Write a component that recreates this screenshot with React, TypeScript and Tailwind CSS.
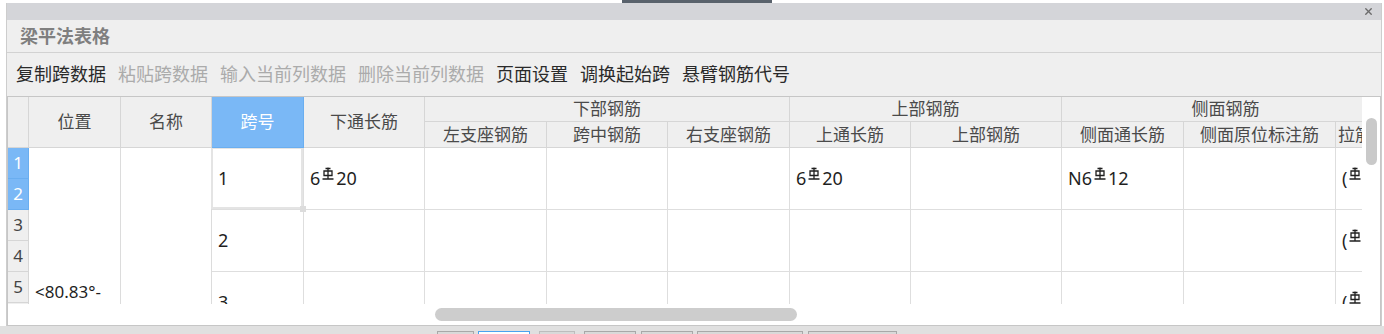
import React from "react";
import { X } from "lucide-react";

const Rebar = () => (
  <svg
    width="12"
    height="13"
    viewBox="0 0 12 13"
    fill="none"
    stroke="#1f1f1f"
    strokeWidth="1.3"
    className="inline-block align-[5px] mx-[2px]"
  >
    <path d="M6 0.5V11.5M3.5 1.5H8.5M2 4H10V8.5H2ZM0.5 12H11.5" />
  </svg>
);

const Bar = ({ n, d, pre = "" }: { n: string; d: string; pre?: string }) => (
  <span className="whitespace-nowrap">
    {pre}
    {n}
    <Rebar />
    {d}
  </span>
);

interface Col {
  w: string;
  cells: React.ReactNode[];
}

const dataCols: Col[] = [
  { w: "w-[92px]", cells: ["1", "2", "3"] },
  { w: "w-[121px]", cells: [<Bar n="6" d="20" />, "", ""] },
  { w: "w-[122px]", cells: ["", "", ""] },
  { w: "w-[121px]", cells: ["", "", ""] },
  { w: "w-[122px]", cells: ["", "", ""] },
  { w: "w-[121px]", cells: [<Bar n="6" d="20" />, "", ""] },
  { w: "w-[151px]", cells: ["", "", ""] },
  { w: "w-[122px]", cells: [<Bar n="N6" d="12" />, "", ""] },
  { w: "w-[152px]", cells: ["", "", ""] },
  {
    w: "w-[54px]",
    cells: [<Bar pre="(" n="" d="12)" />, <Bar pre="(" n="" d="12)" />, <Bar pre="(" n="" d="12)" />],
  },
];

const head = "flex items-center justify-center border-r border-b border-[#d6d6d6] bg-[#efefef] text-[#4a4a4a] whitespace-nowrap overflow-hidden";

const tools = [
  { t: "复制跨数据", on: true },
  { t: "粘贴跨数据", on: false },
  { t: "输入当前列数据", on: false },
  { t: "删除当前列数据", on: false },
  { t: "页面设置", on: true },
  { t: "调换起始跨", on: true },
  { t: "悬臂钢筋代号", on: true },
];

export default function App() {
  return (
    <div className="w-[1384px] h-[334px] overflow-hidden bg-white flex flex-col font-['Noto_Sans','Noto_Sans_CJK_SC',sans-serif]">
      <div className="h-[3px] flex shrink-0">
        <div className="ml-[622px] w-[150px] bg-[#59626c]" />
      </div>

      <div className="flex-1 min-h-0 ml-[6px] mr-[2px] flex flex-col border-l border-r border-[#cdcdcd]">
        <div className="h-[17px] shrink-0 bg-[#d4d5d9] flex items-center justify-end pr-[7px]">
          <X size={11} strokeWidth={3} color="#6b6b6b" />
        </div>

        <div className="h-[33px] shrink-0 bg-[#efefef] border-b border-[#d2d2d2] flex items-center pl-[13px] text-[18px] font-bold text-[#7f7f7f]">
          梁平法表格
        </div>

        <div className="h-[43px] shrink-0 bg-[#efefef] flex items-center gap-[12px] pl-[9px] text-[18px]">
          {tools.map((x) => (
            <span key={x.t} className={x.on ? "text-[#2a2a2a]" : "text-[#ababab]"}>
              {x.t}
            </span>
          ))}
        </div>

        {/* table frame */}
        <div className="flex-1 min-h-0 flex bg-white border border-[#c6c6c6]">
          <div className="w-[1354px] flex flex-col overflow-hidden">
            <div className="h-[51px] shrink-0 grid grid-cols-[21px_92px_91px_92px_121px_122px_121px_122px_121px_151px_122px_152px_54px] grid-rows-[25px_26px] w-[1382px] text-[17px]">
              <div className={`${head} row-span-2`} />
              <div className={`${head} row-span-2`}>位置</div>
              <div className={`${head} row-span-2`}>名称</div>
              <div className="row-span-2 flex items-center justify-center border-r border-b border-[#6aaef0] bg-[#7ab8f6] text-white">
                跨号
              </div>
              <div className={`${head} row-span-2`}>下通长筋</div>
              <div className={`${head} col-span-3`}>下部钢筋</div>
              <div className={`${head} col-span-2`}>上部钢筋</div>
              <div className={`${head} col-span-3`}>侧面钢筋</div>
              <div className={head}>左支座钢筋</div>
              <div className={head}>跨中钢筋</div>
              <div className={head}>右支座钢筋</div>
              <div className={head}>上通长筋</div>
              <div className={head}>上部钢筋</div>
              <div className={head}>侧面通长筋</div>
              <div className={head}>侧面原位标注筋</div>
              <div className={`${head} justify-start pl-[2px]`}>拉筋</div>
            </div>

            <div className="h-[156px] shrink-0 flex overflow-hidden text-[18px] text-[#1f1f1f]">
              <div className="w-[21px] shrink-0 flex flex-col text-[17px]">
                {["1", "2", "3", "4", "5", "6"].map((n, i) => (
                  <div
                    key={n}
                    className={
                      i < 2
                        ? "h-[31px] shrink-0 flex items-center justify-center border-r border-b border-[#6aaef0] bg-[#7ab8f6] text-white"
                        : "h-[31px] shrink-0 flex items-center justify-center border-r border-b border-[#d6d6d6] bg-[#efefef] text-[#444]"
                    }
                  >
                    {n}
                  </div>
                ))}
              </div>
              <div className="w-[92px] shrink-0 border-r border-[#dcdcdc] pt-[134px] pl-[6px] leading-[20px] text-[17px] whitespace-nowrap">
                &lt;80.83°-
              </div>
              <div className="w-[91px] shrink-0 border-r border-[#dcdcdc]" />
              {dataCols.map((c, ci) => (
                <div key={ci} className={`${c.w} shrink-0 flex flex-col`}>
                  {c.cells.map((v, ri) => (
                    <div
                      key={ri}
                      className="relative h-[62px] shrink-0 flex items-center pl-[6px] border-r border-b border-[#dedede] overflow-visible whitespace-nowrap"
                    >
                      {ci === 0 && ri === 0 && (
                        <>
                          <div className="absolute -left-[1px] -top-[1px] right-0 bottom-0 border-2 border-[#e4e4e4]" />
                          <div className="absolute -right-[3px] -bottom-[3px] w-[6px] h-[6px] bg-[#dcdcdc] z-10" />
                        </>
                      )}
                      <span className="relative">{v}</span>
                    </div>
                  ))}
                </div>
              ))}
            </div>

            <div className="flex-1 min-h-0 pt-[4px] pl-[427px]">
              <div className="w-[362px] h-[13px] rounded-full bg-[#cdcdcd]" />
            </div>
          </div>

          <div className="flex-1 flex flex-col items-center pt-[21px]">
            <div className="w-[11px] h-[47px] rounded-full bg-[#c9c9c9]" />
          </div>
        </div>
      </div>

      <div className="h-[8px] shrink-0 bg-[#e0e0e0] flex items-start pt-[5px] pl-[437px]">
        <div className="w-[37px] h-[10px] border border-[#a8a8a8] bg-[#d9d9d9]" />
        <div className="ml-[4px] w-[52px] h-[10px] border border-[#4aa3f0] bg-white" />
        <div className="ml-[9px] w-[36px] h-[10px] border border-[#bdbdbd] bg-[#d9d9d9]" />
        <div className="ml-[9px] w-[52px] h-[10px] border border-[#a8a8a8] bg-[#d9d9d9]" />
        <div className="ml-[5px] w-[52px] h-[10px] border border-[#a8a8a8] bg-[#d9d9d9]" />
        <div className="ml-[4px] w-[106px] h-[10px] border border-[#a8a8a8] bg-[#d9d9d9]" />
        <div className="ml-[5px] w-[89px] h-[10px] border border-[#a8a8a8] bg-[#d9d9d9]" />
      </div>
    </div>
  );
}
